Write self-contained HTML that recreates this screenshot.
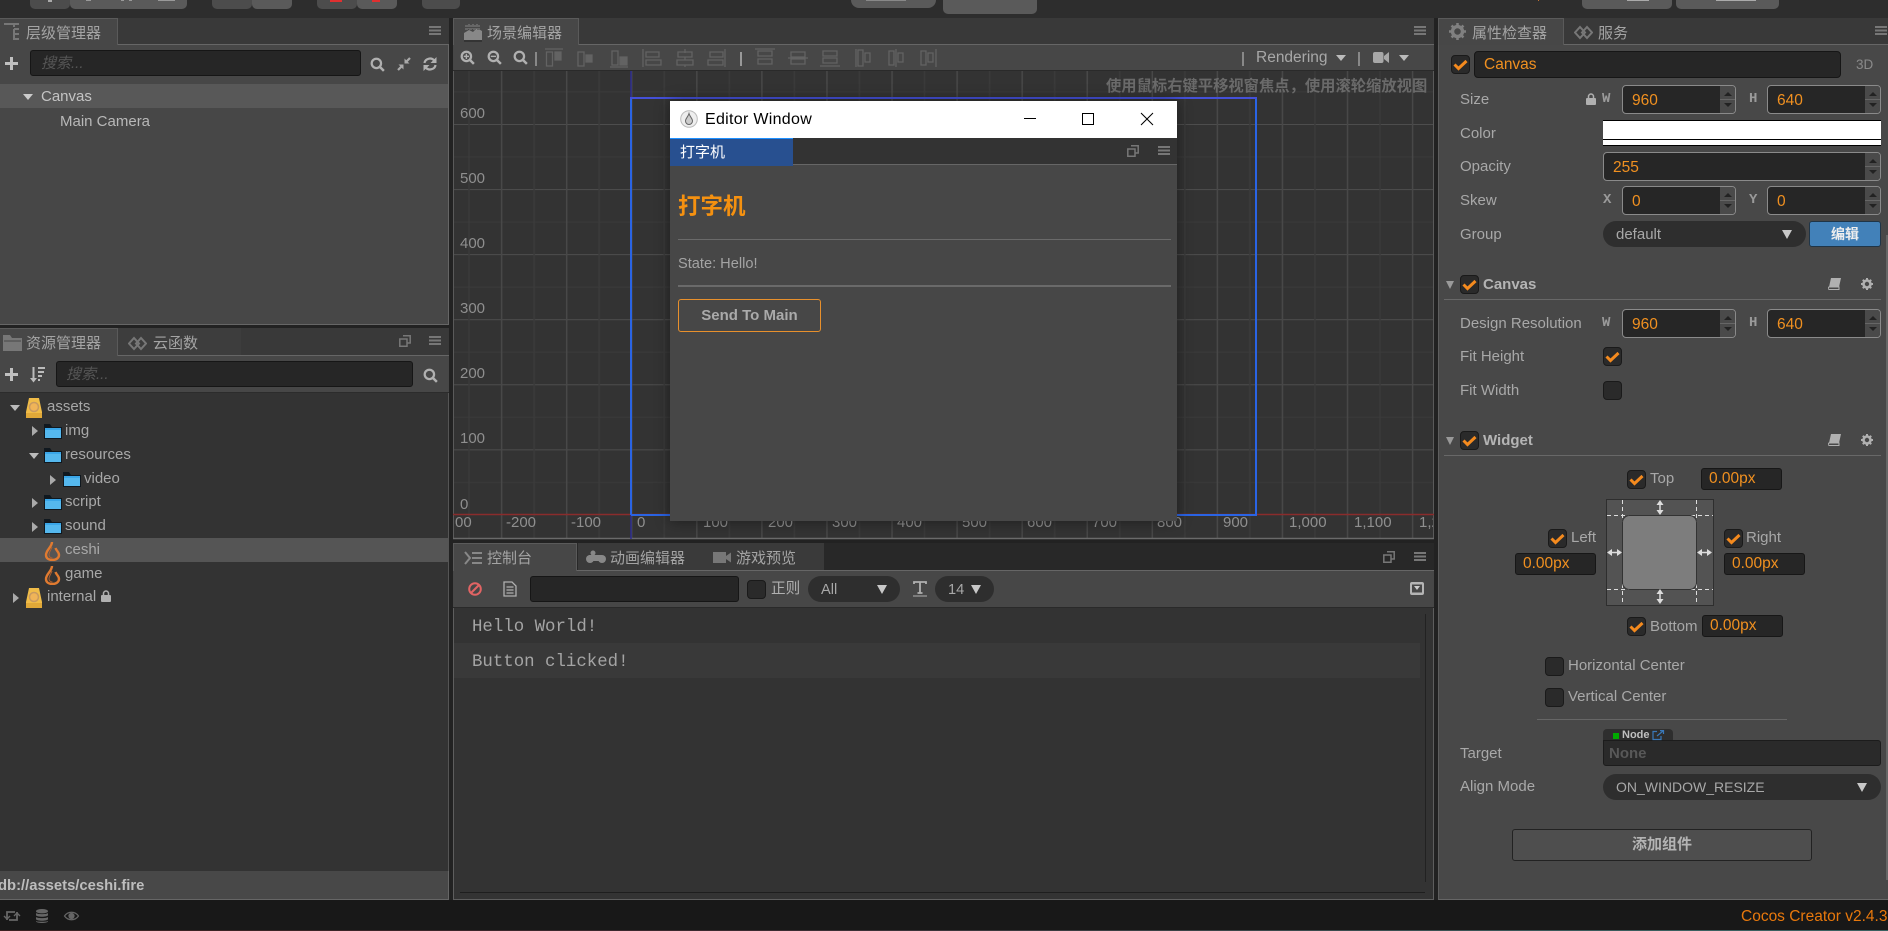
<!DOCTYPE html>
<html lang="zh"><head><meta charset="utf-8"><title>Cocos Creator</title>
<style>
html,body{margin:0;padding:0;width:1888px;height:931px;overflow:hidden;background:#222}
body{position:relative;font-family:"Liberation Sans","Noto Sans CJK SC",sans-serif;font-size:15px;color:#a8a8a8}
.a{position:absolute;box-sizing:border-box}
.t{position:absolute;white-space:nowrap;line-height:20px;height:20px;margin-top:1px}
.z{font-size:15px;color:#a4a4a4}
.b{font-weight:bold}
svg{position:absolute;overflow:visible}
.tb{position:absolute;background:#5a5a5a;height:9px;top:0;border-radius:0 0 5px 5px}
.n{position:absolute;box-sizing:border-box;height:29px;background:#262626;border:1px solid #8a8a8a;border-radius:4px;color:#f09020;font-size:15.5px;line-height:29px;padding-left:9px}
.n::before{content:"";position:absolute;right:0;top:0;bottom:0;width:15px;background:#4a4a4a linear-gradient(#666,#666) no-repeat center/100% 1px;border-radius:0 3px 3px 0}
.n u,.n s{position:absolute;right:3px;width:0;height:0;border-left:4px solid transparent;border-right:4px solid transparent}
.n u{top:6px;border-bottom:4px solid #222}.n s{bottom:6px;border-top:4px solid #222}
.p{position:absolute;box-sizing:border-box;background:#262626;border:1px solid #171717;border-radius:3px;color:#f09020;font-size:15.5px;line-height:20px;height:22px;padding-left:7px}
.c{position:absolute;box-sizing:border-box;width:19px;height:19px;background:#2a2a2a;border:1px solid #1a1a1a;border-radius:4px}
.s{position:absolute;box-sizing:border-box;height:26px;background:#2e2e2e;border-radius:13px;line-height:28px;color:#a8a8a8;font-size:14.6px}
.d{position:absolute;width:0;height:0;border-left:5px solid transparent;border-right:5px solid transparent;border-top:9px solid #c8c8c8}
.lb{font-family:"Liberation Mono",monospace;font-size:14px;color:#9a9a9a;font-weight:bold}
.sr{position:absolute;box-sizing:border-box;height:26px;background:#262626;border:1px solid #161616;border-radius:3px;color:#555;font-style:italic;line-height:25px;font-size:15px;padding-left:10px}
.r{position:absolute;font-size:15px;color:#8f8f8f;line-height:18px;white-space:nowrap;margin-top:1px}
</style></head><body>
<svg width="0" height="0" style="position:absolute"><defs>
<symbol id="ham" viewBox="0 0 12 9"><path d="M0 0h12v2H0zM0 3.5h12v2H0zM0 7h12v2H0z" fill="#777"/></symbol>
<symbol id="res" viewBox="0 0 12 12"><path d="M4 .8h7.2V8H8.5M.8 4H8v7.2H.8z" fill="none" stroke="#777" stroke-width="1.5"/></symbol>
<symbol id="chk" viewBox="0 0 19 19"><path d="M3.5 9.5l4 4 8-7.5" fill="none" stroke="#f48a1e" stroke-width="3"/></symbol>
<symbol id="sea" viewBox="0 0 16 16"><circle cx="6.8" cy="6.8" r="5" fill="none" stroke="#b0b0b0" stroke-width="2.4"/><path d="M10.5 10.5l4.3 4.3" stroke="#b0b0b0" stroke-width="2.6"/></symbol>
<symbol id="fol" viewBox="0 0 18 15"><path d="M0 0h6l2 3h10v12H0z" fill="#10181f"/><path d="M1 5h16v9H1z" fill="#55b8ee"/><path d="M1 4h16v2H1z" fill="#3aa6e8"/></symbol>
<symbol id="fla" viewBox="0 0 17 20"><path d="M8 1C8 6 2 9 2 14c0 3.500 3 5 6.500 5S15 17 15 14c0-3-2.500-4-3.500-7" fill="none" stroke="#e07a30" stroke-width="2.400"/><path d="M8 6c-1 3-3 5-3 8 0 2 2 3 3.500 3" fill="none" stroke="#b06030" stroke-width="1"/></symbol>
<symbol id="cube" viewBox="0 0 18 20"><path d="M4 0h10l3 14v6H1v-6z" fill="#f0bc48"/><path d="M1 15h16v5H1z" fill="#e0a838"/><circle cx="9" cy="9" r="4.500" fill="#f0b458" stroke="#c89a60" stroke-width="1.500"/></symbol>
<symbol id="plus" viewBox="0 0 13 13"><path d="M5 0h3v5h5v3H8v5H5V8H0V5h5z" fill="#c0c0c0"/></symbol>
<symbol id="book" viewBox="0 0 13 12"><path d="M3 0h10l-2 9H1z" fill="#b0b0b0"/><path d="M1 9h10v2.500H1.500A1.300 1.300 0 0 1 1 9z" fill="none" stroke="#b0b0b0" stroke-width="1"/></symbol>
<symbol id="gear" viewBox="0 0 12 12"><circle cx="6" cy="6" r="3.500" fill="none" stroke="#b0b0b0" stroke-width="2.600"/><path d="M6 0v12M0 6h12M1.800 1.800l8.400 8.400M10.200 1.800l-8.400 8.400" stroke="#b0b0b0" stroke-width="2" stroke-dasharray="2 8 2"/></symbol>
<symbol id="link" viewBox="0 0 19 19"><path d="M1 9.500L6 4l5 5.500-5 5.500zM8 9.500L13 4l5 5.500-5 5.500z" fill="none" stroke="#777" stroke-width="2"/></symbol>
</defs></svg>

<!-- top bar -->
<div class="a" style="left:0;top:0;width:1888px;height:18px;background:#2d2d2d"></div>
<div class="tb" style="left:30px;width:40px;background:#4c4c4c"></div><div class="tb" style="left:70px;width:117px"></div>
<div class="tb" style="left:212px;width:40px;background:#4c4c4c"></div><div class="tb" style="left:252px;width:40px"></div>
<div class="tb" style="left:317px;width:40px;background:#4c4c4c"></div><div class="tb" style="left:357px;width:40px"></div>
<div class="tb" style="left:422px;width:38px;background:#4c4c4c"></div>
<div class="tb" style="left:851px;width:85px;height:8px;border-radius:0 0 12px 12px"></div>
<div class="tb" style="left:943px;width:94px;height:14px"></div>
<div class="tb" style="left:1582px;width:90px"></div><div class="tb" style="left:1676px;width:103px"></div>
<div class="a" style="left:48px;top:0;width:4px;height:2px;background:#aaa"></div>
<div class="a" style="left:86px;top:0;width:5px;height:1px;background:#999"></div>
<div class="a" style="left:121px;top:0;width:3px;height:1px;background:#999"></div>
<div class="a" style="left:129px;top:0;width:3px;height:1px;background:#999"></div>
<div class="a" style="left:158px;top:0;width:17px;height:1px;background:#999"></div>
<div class="a" style="left:330px;top:0;width:12px;height:2px;background:#e03030"></div>
<div class="a" style="left:372px;top:0;width:8px;height:2px;background:#e03030"></div>
<div class="a" style="left:866px;top:0;width:40px;height:1px;background:#888"></div>
<div class="a" style="left:1538px;top:0;width:1px;height:1px;background:#c07030"></div>
<div class="a" style="left:1627px;top:0;width:22px;height:1px;background:#aaa"></div>
<div class="a" style="left:1716px;top:0;width:40px;height:1px;background:#aaa"></div>

<!-- hierarchy panel -->
<div class="a" style="left:0;top:18px;width:449px;height:27px;background:#393939;border-bottom:1px solid #666"></div>
<div class="a" style="left:0;top:18px;width:118px;height:27px;background:#474747;border:1px solid #5a5a5a;border-left:0;border-bottom:0"></div>
<svg style="left:4px;top:23px" width="16" height="18" viewBox="0 0 16 18"><path d="M0 1h15M10 1v3M10 6h5M10 6v5h5M10 11v5h5" fill="none" stroke="#777" stroke-width="2"/></svg>
<span class="t z" style="left:26px;top:23px">层级管理器</span>
<svg style="left:429px;top:26px" width="12" height="9"><use href="#ham"/></svg>
<div class="a" style="left:0;top:45px;width:449px;height:280px;background:#474747;border-right:1px solid #666;border-bottom:1px solid #666"></div>
<svg style="left:5px;top:57px" width="13" height="13"><use href="#plus"/></svg>
<div class="sr" style="left:30px;top:50px;width:331px">搜索...</div>
<svg style="left:370px;top:57px" width="15" height="15"><use href="#sea"/></svg>
<svg style="left:397px;top:57px" width="14" height="14" viewBox="0 0 14 14"><path d="M13 1L8.500 5.500M1 13l4.500-4.500" stroke="#aaa" stroke-width="2.200"/><path d="M7.500 1.500v5h5zM1.500 7.500h5v5z" fill="#aaa"/></svg>
<svg style="left:423px;top:57px" width="14" height="14" viewBox="0 0 14 14"><path d="M1.500 6a5.500 5 0 0 1 9.800-2.500M12.500 8a5.500 5 0 0 1-9.800 2.500" fill="none" stroke="#b0b0b0" stroke-width="2.200"/><path d="M13.500 0v6h-6zM.5 14V8h6z" fill="#b0b0b0"/></svg>
<div class="a" style="left:0;top:84px;width:448px;height:24px;background:#585858"></div>
<div class="a" style="left:23px;top:94px;border-left:5px solid transparent;border-right:5px solid transparent;border-top:6px solid #ccc"></div>
<span class="t" style="left:41px;top:86px;color:#c4c4c4">Canvas</span>
<span class="t" style="left:60px;top:111px;color:#b8b8b8">Main Camera</span>

<!-- assets panel -->
<div class="a" style="left:0;top:328px;width:449px;height:28px;background:#393939;border-bottom:1px solid #666"></div>
<div class="a" style="left:0;top:328px;width:118px;height:28px;background:#474747;border:1px solid #5a5a5a;border-left:0;border-bottom:0"></div>
<div class="a" style="left:118px;top:328px;width:123px;height:27px;background:#3d3d3d"></div>
<svg style="left:3px;top:335px" width="19" height="16" viewBox="0 0 19 16"><path d="M0 0h7l2 3h10v13H0z" fill="#777"/><path d="M1 6h17" stroke="#474747" stroke-width="1"/></svg>
<span class="t z" style="left:26px;top:333px">资源管理器</span>
<svg style="left:128px;top:334px" width="19" height="19"><use href="#link"/></svg>
<span class="t z" style="left:153px;top:333px">云函数</span>
<svg style="left:399px;top:335px" width="12" height="12"><use href="#res"/></svg>
<svg style="left:429px;top:336px" width="12" height="9"><use href="#ham"/></svg>
<div class="a" style="left:0;top:356px;width:449px;height:37px;background:#474747;border-bottom:1px solid #2c2c2c"></div>
<svg style="left:5px;top:368px" width="13" height="13"><use href="#plus"/></svg>
<svg style="left:30px;top:367px" width="16" height="16" viewBox="0 0 16 16"><path d="M3.500 0v13" stroke="#bbb" stroke-width="2"/><path d="M0 11h7l-3.500 4.500z" fill="#bbb"/><path d="M8 1h7M8 5h6M8 9h4M8 13h2" stroke="#bbb" stroke-width="2"/></svg>
<div class="sr" style="left:56px;top:361px;width:357px;padding-left:9px">搜索...</div>
<svg style="left:423px;top:368px" width="15" height="15"><use href="#sea"/></svg>
<div class="a" style="left:0;top:393px;width:449px;height:478px;background:#333;border-right:1px solid #555"></div>
<div class="a" style="left:0;top:538px;width:448px;height:24px;background:#555"></div>
<div class="a" style="left:10px;top:405px;border-left:5px solid transparent;border-right:5px solid transparent;border-top:6px solid #bbb"></div>
<svg style="left:25px;top:398px" width="18" height="20"><use href="#cube"/></svg>
<span class="t" style="left:47px;top:396px">assets</span>
<div class="a" style="left:32px;top:426px;border-top:5px solid transparent;border-bottom:5px solid transparent;border-left:6px solid #aaa"></div>
<svg style="left:44px;top:424px" width="18" height="15"><use href="#fol"/></svg>
<span class="t" style="left:65px;top:420px">img</span>
<div class="a" style="left:29px;top:453px;border-left:5px solid transparent;border-right:5px solid transparent;border-top:6px solid #bbb"></div>
<svg style="left:44px;top:448px" width="18" height="15"><use href="#fol"/></svg>
<span class="t" style="left:65px;top:444px">resources</span>
<div class="a" style="left:50px;top:475px;border-top:5px solid transparent;border-bottom:5px solid transparent;border-left:6px solid #aaa"></div>
<svg style="left:63px;top:472px" width="18" height="15"><use href="#fol"/></svg>
<span class="t" style="left:84px;top:468px">video</span>
<div class="a" style="left:32px;top:498px;border-top:5px solid transparent;border-bottom:5px solid transparent;border-left:6px solid #aaa"></div>
<svg style="left:44px;top:495px" width="18" height="15"><use href="#fol"/></svg>
<span class="t" style="left:65px;top:491px">script</span>
<div class="a" style="left:32px;top:522px;border-top:5px solid transparent;border-bottom:5px solid transparent;border-left:6px solid #aaa"></div>
<svg style="left:44px;top:519px" width="18" height="15"><use href="#fol"/></svg>
<span class="t" style="left:65px;top:515px">sound</span>
<svg style="left:44px;top:541px" width="17" height="20"><use href="#fla"/></svg>
<span class="t" style="left:65px;top:539px">ceshi</span>
<svg style="left:44px;top:565px" width="17" height="20"><use href="#fla"/></svg>
<span class="t" style="left:65px;top:563px">game</span>
<div class="a" style="left:13px;top:593px;border-top:5px solid transparent;border-bottom:5px solid transparent;border-left:6px solid #aaa"></div>
<svg style="left:25px;top:588px" width="18" height="20"><use href="#cube"/></svg>
<span class="t" style="left:47px;top:586px">internal</span>
<svg style="left:101px;top:590px" width="10" height="12" viewBox="0 0 10 12"><path d="M2.500 6V3.500a2.500 2.500 0 0 1 5 0V6" fill="none" stroke="#b0b0b0" stroke-width="1.500"/><rect y="5" width="10" height="7" rx="1" fill="#b0b0b0"/></svg>
<div class="a" style="left:0;top:871px;width:449px;height:29px;background:#484848;border-right:1px solid #666;border-bottom:1px solid #666"></div>
<span class="t b" style="left:-2px;top:875px;color:#bdbdbd;font-size:14.800px">db://assets/ceshi.fire</span>

<!-- scene panel -->
<div class="a" style="left:453px;top:18px;width:981px;height:27px;background:#393939;border-bottom:1px solid #666"></div>
<div class="a" style="left:453px;top:18px;width:126px;height:27px;background:#474747;border:1px solid #5a5a5a;border-bottom:0"></div>
<svg style="left:464px;top:23px" width="18" height="19" viewBox="0 0 18 19"><path d="M0 10l5-3 4 2 4-4 5 3v9H0z" fill="#888"/><path d="M0 18h18" stroke="#222" stroke-width="1"/><path d="M1 3h16M1 6h16M5 1v5M9 1v5M13 1v5" stroke="#666" stroke-width="2" stroke-dasharray="3 1"/></svg>
<span class="t z" style="left:487px;top:23px">场景编辑器</span>
<svg style="left:1414px;top:26px" width="12" height="9"><use href="#ham"/></svg>
<div class="a" style="left:453px;top:45px;width:981px;height:26px;background:#474747;border-bottom:1px solid #2a2a2a"></div>
<svg style="left:460px;top:50px" width="15" height="15" viewBox="0 0 16 16"><circle cx="6.800" cy="6.800" r="5" fill="none" stroke="#b0b0b0" stroke-width="2.400"/><path d="M10.500 10.500l4.300 4.300" stroke="#b0b0b0" stroke-width="2.600"/><path d="M4 6.800h5.600M6.800 4v5.600" stroke="#b0b0b0" stroke-width="1.500"/></svg>
<svg style="left:487px;top:50px" width="15" height="15" viewBox="0 0 16 16"><circle cx="6.800" cy="6.800" r="5" fill="none" stroke="#b0b0b0" stroke-width="2.400"/><path d="M10.500 10.500l4.300 4.300" stroke="#b0b0b0" stroke-width="2.600"/><path d="M4 6.800h5.600" stroke="#b0b0b0" stroke-width="1.500"/></svg>
<svg style="left:513px;top:50px" width="15" height="15"><use href="#sea"/></svg>
<div class="a" style="left:535px;top:52px;width:2px;height:14px;background:#888"></div>
<svg style="left:545px;top:48px" width="400" height="20" viewBox="0 0 400 20" fill="none" stroke="#636363" stroke-width="1.300">
<path d="M0 1h18M1.500 4h6v14h-6z"/><path d="M10 4h6v8h-6z" fill="#636363"/>
<path d="M33 4h6v14h-6z"/><path d="M41 7h6v7h-6z" fill="#636363"/>
<path d="M65 19h18M67 3h6v14h-6z"/><path d="M75 9h7v8h-7z" fill="#636363"/>
<path d="M98 1v18M101 4h13v5h-13zM101 12h15v5h-15z"/>
<path d="M140 1v4M140 9v3M140 17v2M133 4h14v5h-14zM132 12h16v5h-16z"/>
<path d="M180 1v18M165 4h13v5h-13zM163 12h15v5h-15z"/>
<path d="M210 1h20M213 3h14v5h-14zM213 11h14v5h-14z"/>
<path d="M243 10h20M246 4h14v5h-14zM246 11h14v5h-14z"/>
<path d="M275 18h20M278 3h14v5h-14zM278 10h14v5h-14z"/>
<path d="M311 1v18M313 2h5v16h-5zM320 5h5v9h-5z"/>
<path d="M351 1v18M344 3h5v14h-5zM353 5h5v9h-5z"/>
<path d="M391 1v18M376 3h5v14h-5zM383 5h5v9h-5z"/>
</svg>
<div class="a" style="left:740px;top:52px;width:2px;height:14px;background:#999"></div>
<div class="a" style="left:1242px;top:52px;width:2px;height:14px;background:#888"></div>
<span class="t" style="left:1256px;top:47px;color:#a8a8a8;font-size:15.500px">Rendering</span>
<div class="a" style="left:1336px;top:55px;border-left:5px solid transparent;border-right:5px solid transparent;border-top:6px solid #bbb"></div>
<div class="a" style="left:1358px;top:52px;width:2px;height:14px;background:#888"></div>
<svg style="left:1373px;top:52px" width="16" height="11" viewBox="0 0 16 11"><rect width="10.500" height="11" rx="2" fill="#a8a8a8"/><path d="M11 4l5-4v11l-5-4z" fill="#a8a8a8"/></svg>
<div class="a" style="left:1399px;top:55px;border-left:5px solid transparent;border-right:5px solid transparent;border-top:6px solid #bbb"></div>

<!-- viewport -->
<svg style="left:453px;top:71px" width="981" height="468" viewBox="453 71 981 468">
<defs>
<pattern id="gv" patternUnits="userSpaceOnUse" x="631" y="0" width="65.07" height="10"><rect width="1.500" height="10" x="0" fill="#484848"/><rect width="1.500" height="10" x="32.500" fill="#3a3a3a"/></pattern>
<pattern id="gh" patternUnits="userSpaceOnUse" x="0" y="124" width="10" height="65.07"><rect width="10" height="1" y="0" fill="#4d4d4d"/><rect width="10" height="1" y="32.500" fill="#3a3a3a"/></pattern>
</defs>
<rect x="453" y="71" width="981" height="468" fill="#333"/>
<rect x="453" y="71" width="981" height="444" fill="url(#gh)"/>
<rect x="453" y="71" width="981" height="468" fill="url(#gv)"/>
<path d="M453.500 71v468" stroke="#5a5a5a"/>
<path d="M1433.500 71v468" stroke="#5a5a5a"/>
<path d="M453 538.500h981" stroke="#6a6a6a" stroke-width="1.500"/>
<path d="M453 514.500h981" stroke="#8a2c2c" stroke-width="1.500"/>
<path d="M631 71v468" stroke="#2d2d90" stroke-width="1.500"/>
<path d="M631 515h625M631 98v417M1256 98v418" stroke="#2a64e4" stroke-width="2" fill="none"/>
<path d="M630 98h627" stroke="#4450d8" stroke-width="2"/>
</svg>
<div class="r" style="left:460px;top:104px">600</div>
<div class="r" style="left:460px;top:169px">500</div>
<div class="r" style="left:460px;top:234px">400</div>
<div class="r" style="left:460px;top:299px">300</div>
<div class="r" style="left:460px;top:364px">200</div>
<div class="r" style="left:460px;top:429px">100</div>
<div class="r" style="left:460px;top:495px">0</div>
<div class="r" style="left:455px;top:513px">00</div>
<div class="r" style="left:506px;top:513px">-200</div>
<div class="r" style="left:571px;top:513px">-100</div>
<div class="r" style="left:637px;top:513px">0</div>
<div class="r" style="left:703px;top:513px">100</div>
<div class="r" style="left:768px;top:513px">200</div>
<div class="r" style="left:832px;top:513px">300</div>
<div class="r" style="left:897px;top:513px">400</div>
<div class="r" style="left:962px;top:513px">500</div>
<div class="r" style="left:1027px;top:513px">600</div>
<div class="r" style="left:1092px;top:513px">700</div>
<div class="r" style="left:1157px;top:513px">800</div>
<div class="r" style="left:1223px;top:513px">900</div>
<div class="r" style="left:1289px;top:513px">1,000</div>
<div class="r" style="left:1354px;top:513px">1,100</div>
<div class="a" style="left:1419px;top:513px;width:14px;height:20px;overflow:hidden"><div class="r" style="left:0;top:0">1,200</div></div>
<span class="t b" style="left:1106px;top:76px;color:#6a6a6a;font-size:15.300px">使用鼠标右键平移视窗焦点，使用滚轮缩放视图</span>

<!-- floating window -->
<div class="a" style="left:670px;top:101px;width:507px;height:420px;background:#474747;box-shadow:0 0 14px rgba(0,0,0,.45)"></div>
<div class="a" style="left:670px;top:101px;width:507px;height:37px;background:#fff"></div>
<svg style="left:680px;top:110px" width="18" height="18" viewBox="0 0 18 18"><circle cx="9" cy="9" r="8.300" fill="#eee" stroke="#bbb"/><path d="M9 3.500C8 7 5.500 8.500 5.500 11a3.500 3.500 0 0 0 7 0C12.500 8.500 10 7 9 3.500z" fill="#ccc" stroke="#666"/></svg>
<span class="t" style="left:705px;top:109px;color:#000;font-size:16px;letter-spacing:.3px">Editor Window</span>
<svg style="left:1020px;top:110px" width="140" height="18" viewBox="0 0 140 18" fill="none" stroke="#000" stroke-width="1"><path d="M4 8.500h12"/><path d="M62.500 3.500h11v11h-11z"/><path d="M121 3l12 12M133 3l-12 12"/></svg>
<div class="a" style="left:670px;top:138px;width:507px;height:27px;background:#333;border-bottom:1px solid #666"></div>
<div class="a" style="left:670px;top:138px;width:123px;height:28px;background:#285090;border-top:1px solid #1e90ff"></div>
<span class="t" style="left:680px;top:142px;color:#fff;font-size:15px">打字机</span>
<svg style="left:1127px;top:145px" width="12" height="12"><use href="#res"/></svg>
<svg style="left:1158px;top:146px" width="12" height="9"><use href="#ham"/></svg>
<span class="t b" style="left:678px;top:196px;color:#f59110;font-size:22.500px">打字机</span>
<div class="a" style="left:678px;top:239px;width:493px;height:1px;background:#6a6a6a"></div>
<span class="t" style="left:678px;top:253px;color:#a4a4a4;font-size:14.600px">State: Hello!</span>
<div class="a" style="left:678px;top:285px;width:493px;height:2px;background:#6a6a6a"></div>
<div class="a" style="left:678px;top:299px;width:143px;height:33px;border:1px solid #e8902c;border-radius:3px;text-align:center;line-height:32px;font-weight:bold;color:#aaa">Send To Main</div>

<!-- console panel -->
<div class="a" style="left:453px;top:543px;width:981px;height:28px;background:#282828;border-bottom:1px solid #666"></div>
<div class="a" style="left:578px;top:543px;width:246px;height:27px;background:#3a3a3a"></div>
<div class="a" style="left:453px;top:543px;width:124px;height:28px;background:#474747;border:1px solid #5a5a5a;border-bottom:0"></div>
<svg style="left:464px;top:551px" width="18" height="14" viewBox="0 0 18 14" fill="none" stroke="#888" stroke-width="2"><path d="M1 1l5 6-5 6"/><path d="M8 2h10M8 7h10M8 12h10"/></svg>
<span class="t z" style="left:487px;top:548px">控制台</span>
<svg style="left:586px;top:550px" width="20" height="15" viewBox="0 0 20 15" fill="#888"><circle cx="4" cy="9" r="4"/><circle cx="16" cy="9" r="4"/><rect x="3" y="5" width="13" height="6"/><circle cx="7" cy="3" r="2.500"/></svg>
<span class="t z" style="left:610px;top:548px">动画编辑器</span>
<svg style="left:713px;top:552px" width="18" height="11" viewBox="0 0 18 11" fill="#777"><rect width="13" height="11"/><path d="M13 4l5-3.500v10L13 7z"/></svg>
<span class="t z" style="left:736px;top:548px">游戏预览</span>
<svg style="left:1383px;top:551px" width="12" height="12"><use href="#res"/></svg>
<svg style="left:1414px;top:552px" width="12" height="9"><use href="#ham"/></svg>
<div class="a" style="left:453px;top:571px;width:981px;height:37px;background:#474747;border-bottom:1px solid #2a2a2a"></div>
<svg style="left:468px;top:582px" width="14" height="14" viewBox="0 0 14 14" fill="none" stroke="#e26464" stroke-width="2"><circle cx="7" cy="7" r="5.800"/><path d="M3 11L11 3"/></svg>
<svg style="left:503px;top:581px" width="14" height="16" viewBox="0 0 14 16" fill="none" stroke="#b0b0b0" stroke-width="1.300"><path d="M1 1h8l4 4v10H1zM3.500 6h7M3.500 9h7M3.500 12h7"/></svg>
<div class="sr" style="left:530px;top:576px;width:209px"></div>
<div class="c" style="left:747px;top:580px"></div>
<span class="t" style="left:771px;top:578px;color:#b0b0b0;font-size:14.600px">正则</span>
<div class="s" style="left:808px;top:576px;width:92px;padding-left:13px">All</div>
<div class="d" style="left:877px;top:585px"></div>
<svg style="left:913px;top:581px" width="14" height="17" viewBox="0 0 14 17" fill="none" stroke="#b0b0b0" stroke-width="1.800"><path d="M1 3V1h12v2M7 1v11M4.500 12h5"/><path d="M0 15h14" stroke-width="1"/></svg>
<div class="s" style="left:935px;top:576px;width:59px;padding-left:13px">14</div>
<div class="d" style="left:971px;top:585px"></div>
<svg style="left:1410px;top:582px" width="14" height="13" viewBox="0 0 14 13"><rect width="14" height="13" rx="2" fill="#b4b4b4"/><rect x="2" y="2.500" width="10" height="8" fill="#474747"/><path d="M4 4h6L7 8z" fill="#ccc"/></svg>
<div class="a" style="left:453px;top:608px;width:981px;height:292px;background:#333;border:1px solid #5e5e5e;border-top:0"></div>
<div class="a" style="left:454px;top:643px;width:966px;height:35px;background:#393939"></div>
<span class="t" style="left:472px;top:617px;font-family:'Liberation Mono',monospace;font-size:17.400px;color:#a4a4a4">Hello World!</span>
<span class="t" style="left:472px;top:652px;font-family:'Liberation Mono',monospace;font-size:17.400px;color:#a4a4a4">Button clicked!</span>
<div class="a" style="left:1425px;top:614px;width:1px;height:268px;background:#222"></div>
<div class="a" style="left:460px;top:892px;width:965px;height:1px;background:#1e1e1e"></div>

<!-- inspector -->
<div class="a" style="left:1438px;top:18px;width:450px;height:27px;background:#393939;border-bottom:1px solid #666"></div>
<div class="a" style="left:1438px;top:18px;width:126px;height:27px;background:#474747;border:1px solid #5a5a5a;border-bottom:0"></div>
<svg style="left:1449px;top:23px" width="17" height="17" viewBox="0 0 12 12"><circle cx="6" cy="6" r="3.500" fill="none" stroke="#808080" stroke-width="2.400"/><path d="M6 0v12M0 6h12M1.800 1.800l8.400 8.400M10.200 1.800l-8.400 8.400" stroke="#808080" stroke-width="1.800" stroke-dasharray="2 8 2"/></svg>
<span class="t z" style="left:1472px;top:23px">属性检查器</span>
<svg style="left:1574px;top:23px" width="19" height="19"><use href="#link"/></svg>
<span class="t z" style="left:1598px;top:23px">服务</span>
<svg style="left:1875px;top:26px" width="12" height="9"><use href="#ham"/></svg>
<div class="a" style="left:1438px;top:45px;width:450px;height:855px;background:#484848;border-left:1px solid #5e5e5e;border-bottom:1px solid #666"></div>
<div class="a" style="left:1886px;top:235px;width:2px;height:645px;background:#666"></div>

<div class="c" style="left:1451px;top:55px"><svg style="left:-1px;top:-1px" width="19" height="19"><use href="#chk"/></svg></div>
<div class="a" style="left:1474px;top:51px;width:367px;height:27px;background:#262626;border:1px solid #161616;border-radius:4px;color:#f09020;font-size:15.500px;line-height:26px;padding-left:9px">Canvas</div>
<span class="t" style="left:1856px;top:54px;font-size:13.500px;color:#8a8a8a">3D</span>

<span class="t" style="left:1460px;top:89px">Size</span>
<svg style="left:1586px;top:93px" width="10" height="12" viewBox="0 0 10 12"><path d="M2.500 6V3.500a2.500 2.500 0 0 1 5 0V6" fill="none" stroke="#b0b0b0" stroke-width="1.500"/><rect y="5" width="10" height="7" rx="1" fill="#b0b0b0"/></svg>
<span class="t lb" style="left:1602px;top:88px">W</span>
<div class="n" style="left:1622px;top:85px;width:114px">960<u></u><s></s></div>
<span class="t lb" style="left:1749px;top:88px">H</span>
<div class="n" style="left:1767px;top:85px;width:114px">640<u></u><s></s></div>

<span class="t" style="left:1460px;top:123px">Color</span>
<div class="a" style="left:1603px;top:120px;width:278px;height:26px;background:#fff;border-bottom:1px solid #000;border-top:1px solid #000"><div class="a" style="left:0;top:18px;width:278px;height:1px;background:#000"></div></div>

<span class="t" style="left:1460px;top:156px">Opacity</span>
<div class="n" style="left:1603px;top:152px;width:278px">255<u></u><s></s></div>

<span class="t" style="left:1460px;top:190px">Skew</span>
<span class="t lb" style="left:1603px;top:189px">X</span>
<div class="n" style="left:1622px;top:186px;width:114px">0<u></u><s></s></div>
<span class="t lb" style="left:1749px;top:189px">Y</span>
<div class="n" style="left:1767px;top:186px;width:114px">0<u></u><s></s></div>

<span class="t" style="left:1460px;top:224px">Group</span>
<div class="s" style="left:1603px;top:221px;width:203px;padding-left:13px;font-size:15px">default</div>
<div class="d" style="left:1782px;top:230px"></div>
<div class="a" style="left:1809px;top:221px;width:72px;height:26px;background:#4281b9;border:1px solid #1f3548;border-radius:3px;text-align:center;line-height:24px;font-weight:bold;color:#eee;font-size:14px">编辑</div>

<div class="a" style="left:1446px;top:281px;border-left:4px solid transparent;border-right:4px solid transparent;border-top:8px solid #999"></div>
<div class="c" style="left:1460px;top:275px"><svg style="left:-1px;top:-1px" width="19" height="19"><use href="#chk"/></svg></div>
<span class="t b" style="left:1483px;top:274px;color:#b4b4b4">Canvas</span>
<svg style="left:1828px;top:278px" width="13" height="12"><use href="#book"/></svg>
<svg style="left:1861px;top:278px" width="12" height="12"><use href="#gear"/></svg>
<div class="a" style="left:1444px;top:299px;width:437px;height:1px;background:#686868"></div>

<span class="t" style="left:1460px;top:313px">Design Resolution</span>
<span class="t lb" style="left:1602px;top:312px">W</span>
<div class="n" style="left:1622px;top:309px;width:114px">960<u></u><s></s></div>
<span class="t lb" style="left:1749px;top:312px">H</span>
<div class="n" style="left:1767px;top:309px;width:114px">640<u></u><s></s></div>
<span class="t" style="left:1460px;top:346px">Fit Height</span>
<div class="c" style="left:1603px;top:347px"><svg style="left:-1px;top:-1px" width="19" height="19"><use href="#chk"/></svg></div>
<span class="t" style="left:1460px;top:380px">Fit Width</span>
<div class="c" style="left:1603px;top:381px"></div>

<div class="a" style="left:1446px;top:437px;border-left:4px solid transparent;border-right:4px solid transparent;border-top:8px solid #999"></div>
<div class="c" style="left:1460px;top:431px"><svg style="left:-1px;top:-1px" width="19" height="19"><use href="#chk"/></svg></div>
<span class="t b" style="left:1483px;top:430px;color:#b4b4b4">Widget</span>
<svg style="left:1828px;top:434px" width="13" height="12"><use href="#book"/></svg>
<svg style="left:1861px;top:434px" width="12" height="12"><use href="#gear"/></svg>
<div class="a" style="left:1444px;top:455px;width:437px;height:1px;background:#686868"></div>

<div class="c" style="left:1627px;top:470px"><svg style="left:-1px;top:-1px" width="19" height="19"><use href="#chk"/></svg></div>
<span class="t" style="left:1650px;top:468px">Top</span>
<div class="p" style="left:1701px;top:468px;width:81px">0.00px</div>

<div class="a" style="left:1606px;top:499px;width:108px;height:107px;background:#535353;border:1px solid #2e2e2e"></div>
<svg style="left:1606px;top:499px" width="108" height="107" viewBox="1606 499 108 107" fill="none">
<path d="M1622.500 500v105M1696.500 500v105M1607 515.500h106M1607 589.500h106" stroke="#ddd" stroke-dasharray="4 3"/>
<rect x="1622.500" y="515.500" width="74" height="74" rx="7" fill="#7d7d7d" stroke="#333"/>
<path d="M1660 503v8M1660 593v8" stroke="#ddd" stroke-width="1.500"/>
<path d="M1656.500 505l3.500-5 3.500 5zM1656.500 510l3.500 5 3.500-5zM1656.500 594l3.500-5 3.500 5zM1656.500 599l3.500 5 3.500-5z" fill="#ddd"/>
<path d="M1609 552.500h11M1699 552.500h11" stroke="#ddd" stroke-width="1.500"/>
<path d="M1612 549l-5 3.500 5 3.500zM1617 549l5 3.500-5 3.500zM1702 549l-5 3.500 5 3.500zM1707 549l5 3.500-5 3.500z" fill="#ddd"/>
</svg>

<div class="c" style="left:1548px;top:529px"><svg style="left:-1px;top:-1px" width="19" height="19"><use href="#chk"/></svg></div>
<span class="t" style="left:1571px;top:527px">Left</span>
<div class="p" style="left:1515px;top:553px;width:81px">0.00px</div>
<div class="c" style="left:1724px;top:529px"><svg style="left:-1px;top:-1px" width="19" height="19"><use href="#chk"/></svg></div>
<span class="t" style="left:1746px;top:527px">Right</span>
<div class="p" style="left:1724px;top:553px;width:81px">0.00px</div>

<div class="c" style="left:1627px;top:617px"><svg style="left:-1px;top:-1px" width="19" height="19"><use href="#chk"/></svg></div>
<span class="t" style="left:1650px;top:616px">Bottom</span>
<div class="p" style="left:1702px;top:615px;width:81px">0.00px</div>

<div class="c" style="left:1545px;top:657px"></div>
<span class="t" style="left:1568px;top:655px">Horizontal Center</span>
<div class="c" style="left:1545px;top:688px"></div>
<span class="t" style="left:1568px;top:686px">Vertical Center</span>
<div class="a" style="left:1537px;top:719px;width:250px;height:1px;background:#666"></div>

<span class="t" style="left:1460px;top:743px">Target</span>
<div class="a" style="left:1603px;top:729px;width:70px;height:14px;background:#2e2e2e;border-radius:4px 4px 0 0"></div>
<div class="a" style="left:1603px;top:740px;width:278px;height:26px;background:#2a2a2a;border:1px solid #1c1c1c;border-radius:0 3px 3px 3px;color:#585858;font-weight:bold;font-size:15px;line-height:25px;padding-left:5px">None</div>
<div class="a" style="left:1613px;top:733px;width:6px;height:6px;background:#0a0"></div>
<span class="t b" style="left:1622px;top:724px;font-size:11px;color:#c0c0c0">Node</span>
<svg style="left:1652px;top:730px" width="12" height="10" viewBox="0 0 12 10" fill="none" stroke="#3a78b8" stroke-width="1.200"><path d="M5 1.500H1v8h8V6M5 6l6-5M8 .6h3.500V4"/></svg>

<span class="t" style="left:1460px;top:776px">Align Mode</span>
<div class="s" style="left:1603px;top:774px;width:278px;padding-left:13px;font-size:14px;line-height:27px">ON_WINDOW_RESIZE</div>
<div class="d" style="left:1857px;top:783px"></div>
<div class="a" style="left:1512px;top:829px;width:300px;height:32px;background:#4e4e4e;border:1px solid #222;border-radius:3px;text-align:center;line-height:30px;font-weight:bold;color:#b4b4b4">添加组件</div>

<!-- status bar -->
<div class="a" style="left:0;top:900px;width:1888px;height:31px;background:#181818"></div>
<svg style="left:4px;top:910px" width="16" height="12" viewBox="0 0 16 12" fill="none" stroke="#666" stroke-width="1.800"><path d="M3 10V2h8M13 2v8H5"/><path d="M0 6l3 3 3-3M10 6l3-3 3 3" stroke-width="1.400"/></svg>
<svg style="left:36px;top:909px" width="12" height="14" viewBox="0 0 12 14" fill="#666"><ellipse cx="6" cy="2.200" rx="6" ry="2.200"/><path d="M0 4c1 1.500 11 1.500 12 0v2.200c-1 2-11 2-12 0zM0 8c1 1.500 11 1.500 12 0v2.200c-1 2-11 2-12 0zM0 12c1 1 11 1 12 0v.5c-1 2-11 2-12 0z"/></svg>
<svg style="left:64px;top:911px" width="15" height="10" viewBox="0 0 15 10" fill="none" stroke="#666" stroke-width="1.200"><path d="M.5 5C4 0 11 0 14.500 5 11 10 4 10 .5 5z"/><circle cx="7.500" cy="5" r="2.500" fill="#666"/></svg>
<span class="t" style="left:1741px;top:906px;color:#e8780c;font-size:15.500px">Cocos Creator v2.4.3</span>
<div class="a" style="left:0;top:930px;width:1888px;height:1px;background:linear-gradient(90deg,#3a2020,#3a2a30 40%,#3a6060 90%)"></div>
</body></html>
